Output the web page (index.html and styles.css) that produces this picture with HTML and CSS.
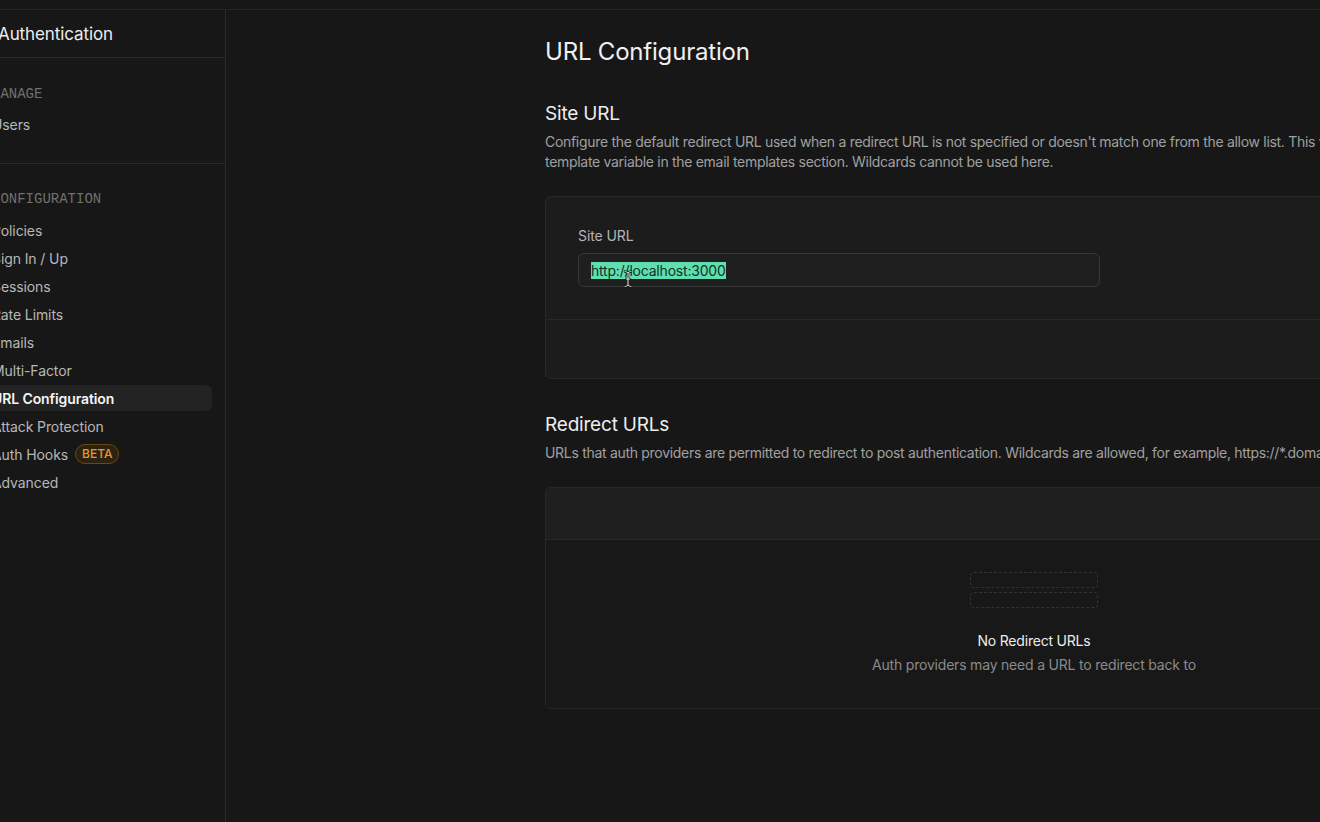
FILE: index.html
```html
<!DOCTYPE html>
<html lang="en">
<head>
<meta charset="utf-8">
<title>URL Configuration</title>
<link rel="stylesheet" href="styles.css">
</head>
<body>
<div class="topbar"></div>
<div class="layout">
  <aside class="sidebar">
    <div class="side-header"><span class="side-title">Authentication</span></div>
    <div class="side-section">
      <div class="side-label">MANAGE</div>
      <ul class="menu">
        <li class="menu-item">Users</li>
      </ul>
    </div>
    <div class="side-section">
      <div class="side-label">CONFIGURATION</div>
      <ul class="menu">
        <li class="menu-item">Policies</li>
        <li class="menu-item">Sign In / Up</li>
        <li class="menu-item">Sessions</li>
        <li class="menu-item">Rate Limits</li>
        <li class="menu-item">Emails</li>
        <li class="menu-item">Multi-Factor</li>
        <li class="menu-item active">URL Configuration</li>
        <li class="menu-item">Attack Protection</li>
        <li class="menu-item">Auth Hooks <span class="badge">BETA</span></li>
        <li class="menu-item">Advanced</li>
      </ul>
    </div>
  </aside>
  <main class="main">
    <div class="content">
      <h1 class="page-title">URL Configuration</h1>

      <h2 class="section-title">Site URL</h2>
      <p class="section-desc">Configure the default redirect URL used when a redirect URL is not specified or doesn't match one from the allow list. This value is also exposed as a<br>template variable in the email templates section. Wildcards cannot be used here.</p>
      <div class="card">
        <div class="card-body">
          <label class="field-label">Site URL</label>
          <div class="input">
            <span class="selected">http://localhost:3000</span>
            <svg class="cursor" width="10" height="18" viewBox="0 0 10 18"><path d="M2 1.5c1 0 2 .5 3 1.5c1-1 2-1.5 3-1.5M5 3v12M2 16.5c1 0 2-.5 3-1.5c1 1 2 1.5 3 1.5M3.5 9h3" fill="none" stroke="#111" stroke-width="2.4" stroke-linecap="round"/><path d="M2 1.5c1 0 2 .5 3 1.5c1-1 2-1.5 3-1.5M5 3v12M2 16.5c1 0 2-.5 3-1.5c1 1 2 1.5 3 1.5M3.5 9h3" fill="none" stroke="#f2f2f2" stroke-width="1" stroke-linecap="round"/></svg>
          </div>
        </div>
        <div class="card-footer"></div>
      </div>

      <h2 class="section-title second">Redirect URLs</h2>
      <p class="section-desc">URLs that auth providers are permitted to redirect to post authentication. Wildcards are allowed, for example, https://*.domain.com</p>
      <div class="card">
        <div class="card-head"></div>
        <div class="empty">
          <div class="ghost"></div>
          <div class="ghost"></div>
          <div class="empty-title">No Redirect URLs</div>
          <div class="empty-sub">Auth providers may need a URL to redirect back to</div>
        </div>
      </div>
    </div>
  </main>
</div>
</body>
</html>
```

FILE: styles.css
```css
* { box-sizing: border-box; }
html, body {
  margin: 0;
  padding: 0;
  width: 1320px;
  height: 822px;
  overflow: hidden;
  background: #171717;
  font-family: Inter, "Noto Sans", sans-serif;
  color: #ededed;
}
.topbar {
  height: 10px;
  border-bottom: 1px solid #262626;
  background: #171717;
}
.layout {
  display: flex;
  height: 812px;
}
.sidebar {
  width: 226px;
  flex: none;
  border-right: 1px solid #2a2a2a;
  background: #171717;
  overflow: hidden;
}
.side-header {
  height: 48px;
  display: flex;
  align-items: center;
  padding-top: 1px;
  border-bottom: 1px solid #2a2a2a;
}
.side-title {
  margin-left: -2px;
  font-size: 17px;
  font-weight: 400;
  color: #ededed;
  white-space: nowrap;
  letter-spacing: -0.1px;
}
.side-section {
  padding: 26px 13px 25px 0;
  border-bottom: 1px solid #2a2a2a;
}
.side-section:last-child { border-bottom: none; padding-top: 25px; }
.side-label {
  margin-left: -8px;
  font-family: "Liberation Mono", "DejaVu Sans Mono", monospace;
  font-size: 14px;
  line-height: 20px;
  color: #707070;
  margin-bottom: 6px;
  white-space: nowrap;
}
.side-section:last-child .side-label { margin-bottom: 7px; }
.menu {
  list-style: none;
  margin: 0;
  padding: 0;
}
.menu-item {
  height: 28px;
  display: flex;
  align-items: center;
  margin-left: -8px;
  font-size: 14px;
  letter-spacing: -0.1px;
  color: #b8b8b8;
  white-space: nowrap;
  border-radius: 6px;
}
.menu-item.active {
  background: #232323;
  color: #f5f5f5;
  font-weight: 600;
  height: 26px;
  margin: 1px 0 1px -8px;
}
.badge {
  margin-left: 7px;
  font-size: 12px;
  line-height: 16px;
  padding: 1px 6px;
  color: #e09a34;
  background: #2d2210;
  border: 1px solid #6a4715;
  border-radius: 10px;
  font-weight: 500;
  letter-spacing: 0;
}
.main {
  flex: 1;
  overflow: hidden;
}
.content {
  width: 978px;
  margin-left: 319px;
  padding-top: 26px;
}
.page-title {
  margin: 0;
  font-size: 24px;
  line-height: 32px;
  font-weight: 400;
  color: #f0f0f0;
  letter-spacing: -0.2px;
}
.section-title {
  margin: 32px 0 4px;
  font-size: 19px;
  line-height: 28px;
  font-weight: 400;
  color: #ededed;
  letter-spacing: -0.2px;
}
.section-desc {
  margin: 0 0 24px;
  font-size: 14px;
  line-height: 20px;
  color: #a0a0a0;
  width: 1100px;
  white-space: nowrap;
  letter-spacing: -0.3px;
}
.card {
  border: 1px solid #282828;
  border-radius: 6px;
  background: #1c1c1c;
  overflow: hidden;
}
.card-body {
  padding: 29px 32px 32px;
  border-bottom: 1px solid #282828;
}
.field-label {
  display: block;
  font-size: 14px;
  line-height: 20px;
  color: #b4b4b4;
  margin-bottom: 7px;
  letter-spacing: -0.1px;
}
.input {
  position: relative;
  width: 522px;
  height: 34px;
  border: 1px solid #383838;
  border-radius: 6px;
  background: #1f1f1f;
  display: flex;
  align-items: center;
  padding-left: 12px;
}
.selected {
  font-size: 14px;
  line-height: 17px;
  background: #5fdfb0;
  color: #14302a;
  letter-spacing: -0.2px;
}
.cursor {
  position: absolute;
  left: 44px;
  top: 16px;
}
.card-footer {
  height: 58px;
}
.card-head {
  height: 52px;
  background: #1f1f1f;
  border-bottom: 1px solid #282828;
}
.empty {
  background: #181818;
  padding: 32px 0 33px;
  display: flex;
  flex-direction: column;
  align-items: center;
}
.ghost {
  width: 128px;
  height: 16px;
  border: 1px dashed #333;
  border-radius: 4px;
  margin-bottom: 4px;
}
.ghost + .ghost { margin-bottom: 23px; }
.empty-title {
  font-size: 14px;
  line-height: 20px;
  color: #ededed;
  margin-bottom: 4px;
  letter-spacing: -0.2px;
}
.empty-sub {
  font-size: 14px;
  line-height: 20px;
  color: #8a8a8a;
  letter-spacing: -0.2px;
}
```
